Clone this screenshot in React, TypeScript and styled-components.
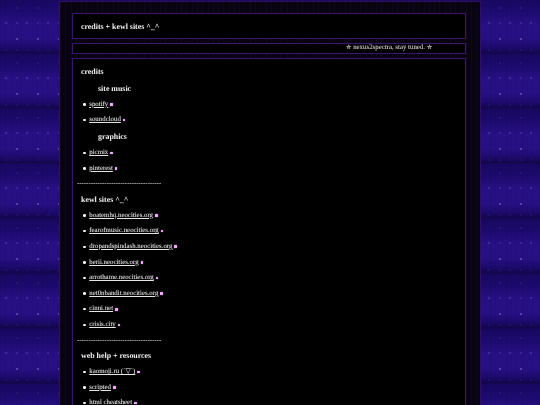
import React from "react";
import styled, { createGlobalStyle } from "styled-components";

const Global = createGlobalStyle`
  html, body { margin: 0; padding: 0; height: 405px; overflow: hidden; background: #1d0a6e; }
  #root { height: 405px; }
`;

const Page = styled.div`
  height: 405px;
  overflow: hidden;
  display: flex;
  justify-content: center;
  font-family: "Liberation Serif", "Times New Roman", serif;
  text-rendering: geometricPrecision;
  filter: blur(0.3px);
  background-color: #230d80;
  background-image:
    radial-gradient(circle at 17px 8px, rgba(170,150,255,.25) 0, transparent 1.1px),
    radial-gradient(circle at 6px 23px, rgba(170,150,255,.3) 0, rgba(170,150,255,.15) 1px, transparent 1.7px),
    radial-gradient(circle at 17px 23px, rgba(190,170,255,.45) 0, transparent 1px),
    radial-gradient(circle at 17px 39px, rgba(210,190,255,.8) 0, transparent 1.1px),
    radial-gradient(circle at 6px 50px, rgba(170,150,255,.18) 0, transparent 1.1px),
    radial-gradient(circle at 17px 50px, rgba(170,150,255,.18) 0, transparent 1.1px),
    repeating-linear-gradient(90deg, rgba(0,0,0,.06) 0 1px, transparent 1px 5.27px),
    linear-gradient(180deg, #190862 0%, #1d0a6e 20%, #270f84 42%, #270f84 70%, #1d0a6c 86%, #14064c 96%, #190862 100%);
  background-size: 21px 55px, 21px 55px, 21px 55px, 21px 55px, 21px 55px, 21px 55px, 100% 100%, 21px 55px;
`;

const Shell = styled.div`
  box-sizing: border-box;
  width: 422px;
  height: 405px;
  margin-top: 1px;
  padding: 11px 14px 0 12px;
  display: flex;
  flex-direction: column;
  gap: 4px;
  background-color: #07030f;
  background-image: repeating-linear-gradient(90deg, rgba(60,30,120,.14) 0 1px, transparent 1px 5.27px);
  border: 1px solid #2e1262;
  border-bottom: none;
`;

const Panel = styled.section`
  box-sizing: border-box;
  background: #000;
  border: 1px solid #3a1670;
`;

const Header = styled(Panel)`
  flex: none;
  height: 26px;
  padding: 0 8px;
  display: flex;
  align-items: center;
`;

const Title = styled.h1`
  margin: 0;
  font-size: 7.9px;
  font-weight: bold;
  color: #f2f2f2;
`;

const Ticker = styled(Panel)`
  flex: none;
  height: 11px;
  padding-left: 273px;
  font-size: 6.85px;
  line-height: 7px;
  color: #e8e8e8;
  white-space: nowrap;
`;

const Star = styled.span`
  font-family: "DejaVu Sans", sans-serif;
  font-size: 6.5px;
`;

const Content = styled(Panel)`
  flex: 1;
  border-bottom: none;
  padding: 5px 8px 0;
  display: flex;
  flex-direction: column;
  font-size: 6.85px;
  line-height: 15.65px;
  overflow: hidden;
`;

const Heading = styled.h2<{ $nested?: boolean }>`
  margin: ${(p) => (p.$nested ? "1.4px 0 0 17px" : "0")};
  font-size: 7.9px;
  line-height: 15.65px;
  font-weight: bold;
  color: #f0f0f0;
`;

const List = styled.ul`
  margin: 0;
  padding: 0 0 0 2.3px;
  list-style: none;
`;

const Item = styled.li`
  height: 15.65px;
  display: flex;
  align-items: center;
  &::before {
    content: "";
    flex: none;
    width: 2.4px;
    height: 2.4px;
    margin-right: 3.6px;
    border-radius: 50%;
    background: #f8f8f8;
  }
`;

const Link = styled.a`
  color: #e6e6e6;
  text-decoration: underline;
  text-decoration-thickness: 0.6px;
  text-underline-offset: 1px;
  text-shadow: 0 0 1px rgba(255,255,255,.25);
`;

const Dot = styled.span`
  flex: none;
  width: 2.6px;
  height: 2.6px;
  margin-left: 2px;
  border-radius: 0.6px;
  background: #f4a8ff;
  box-shadow: 0 0 1.2px #e080ff;
`;

const Divider = styled.div`
  margin-left: -4px;
  color: #eeeeee;
  white-space: nowrap;
`;

const sections: { title: string; nested?: boolean; links: string[] }[] = [
  { title: "site music", nested: true, links: ["spotify", "soundcloud"] },
  { title: "graphics", nested: true, links: ["picmix", "pinterest"] },
];
const kewl = [
  "boatemhq.neocities.org",
  "fearofmusic.neocities.org",
  "dropandspindash.neocities.org",
  "berii.neocities.org",
  "arrothame.neocities.org",
  "net0nbandit.neocities.org",
  "cinni.net",
  "crisis.city",
];
const help = ["kaomoji.ru (´▽`)", "scripted", "html cheatsheet"];

const Links = ({ items }: { items: string[] }) => (
  <List>
    {items.map((l) => (
      <Item key={l}>
        <Link href="#">{l}</Link>
        <Dot />
      </Item>
    ))}
  </List>
);

const rule = "-".repeat(37);

export default function App() {
  return (
    <Page>
      <Global />
      <Shell>
        <Header>
          <Title>credits + kewl sites ^_^</Title>
        </Header>
        <Ticker>
          <Star>✮</Star> nexus2spectra, stay tuned. <Star>✮</Star>
        </Ticker>
        <Content>
          <Heading>credits</Heading>
          {sections.map((s) => (
            <React.Fragment key={s.title}>
              <Heading $nested={s.nested}>{s.title}</Heading>
              <Links items={s.links} />
            </React.Fragment>
          ))}
          <Divider>{rule}</Divider>
          <Heading>kewl sites ^_^</Heading>
          <Links items={kewl} />
          <Divider>{rule}</Divider>
          <Heading>web help + resources</Heading>
          <Links items={help} />
        </Content>
      </Shell>
    </Page>
  );
}
